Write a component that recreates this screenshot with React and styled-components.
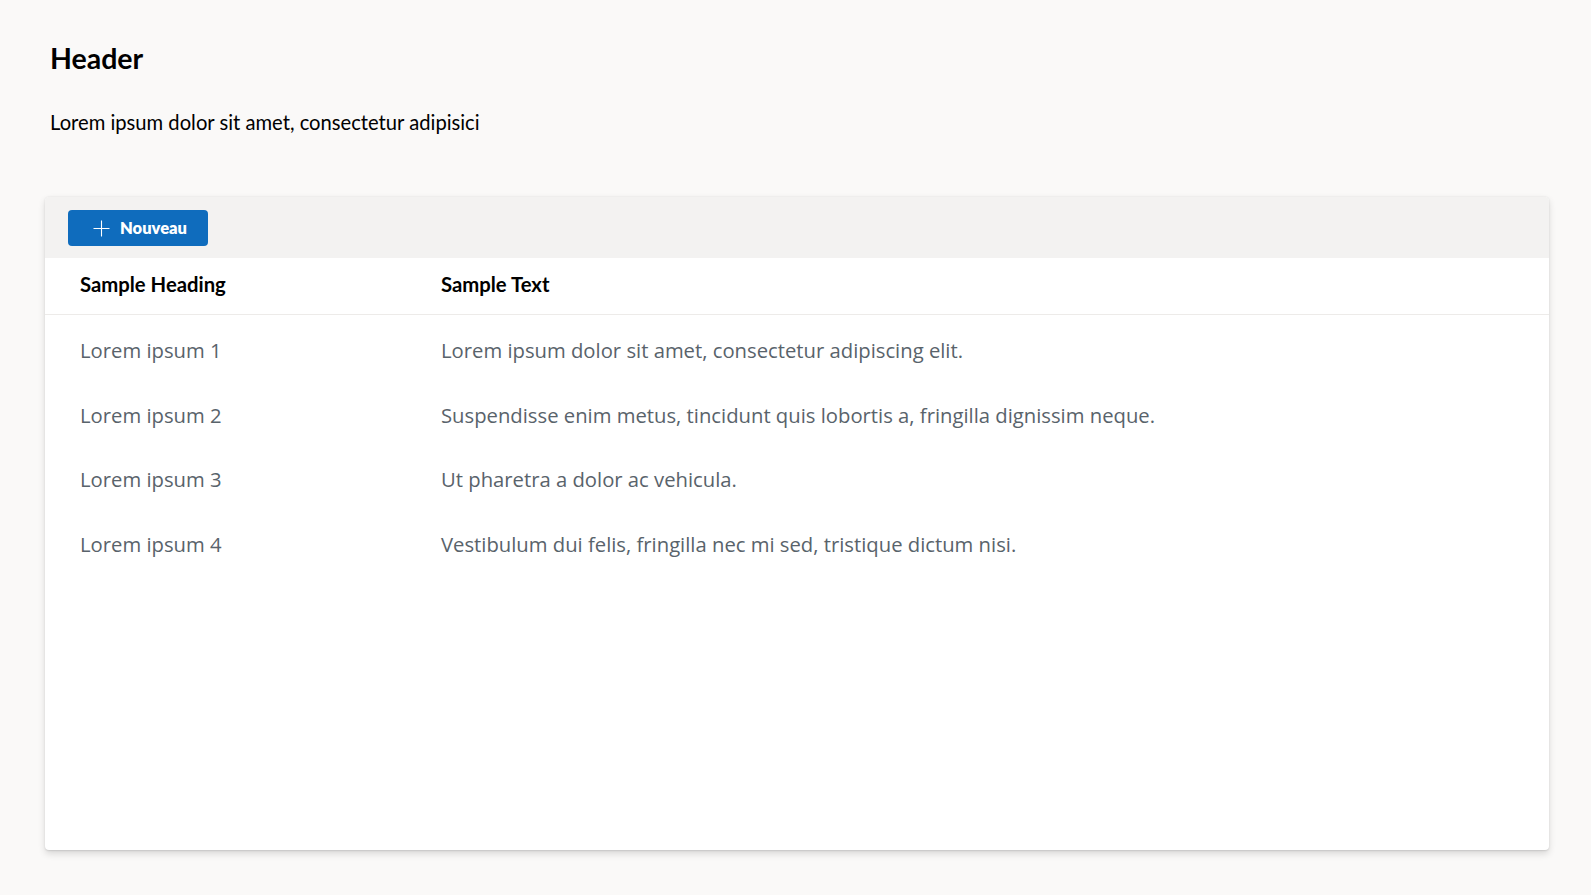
import React from "react";
import styled, { createGlobalStyle } from "styled-components";

const GlobalStyle = createGlobalStyle`
  html, body {
    margin: 0;
    padding: 0;
    background: #faf9f8;
  }
  body {
    font-family: Lato, "Open Sans", sans-serif;
    color: #000;
  }
`;

const Page = styled.div`
  min-height: 895px;
  box-sizing: border-box;
  padding: 41px 42px 45px 45px;
  display: flex;
  flex-direction: column;
`;

const Intro = styled.header`
  padding-left: 5px;
  display: flex;
  flex-direction: column;
`;

const Title = styled.h1`
  margin: 0;
  font-family: Lato, sans-serif;
  font-weight: 700;
  font-size: 28.5px;
  line-height: 34px;
  color: #000;
`;

const Subtitle = styled.p`
  margin: 35px 0 0;
  font-family: Lato, sans-serif;
  font-size: 20.2px;
  line-height: 24px;
  color: #000;
`;

const Card = styled.section`
  margin-top: 63px;
  height: 653px;
  background: #fff;
  border-radius: 4px;
  box-shadow: 0 3.2px 7.2px 0 rgba(0, 0, 0, 0.13),
    0 0.6px 1.8px 0 rgba(0, 0, 0, 0.11);
  display: flex;
  flex-direction: column;
  overflow: hidden;
`;

const Toolbar = styled.div`
  height: 61px;
  box-sizing: border-box;
  background: #f3f2f1;
  display: flex;
  align-items: center;
  padding: 1px 23px 0;
`;

const PrimaryButton = styled.button`
  height: 36px;
  width: 140px;
  display: flex;
  align-items: center;
  justify-content: flex-start;
  gap: 10px;
  padding: 0 0 0 25px;
  border: none;
  border-radius: 4px;
  background: #0f6cbd;
  color: #fff;
  font-family: Lato, sans-serif;
  font-weight: 800;
  font-size: 16.5px;
  cursor: pointer;
  box-sizing: border-box;
`;

const Row = styled.div`
  display: grid;
  grid-template-columns: 361px 1fr;
  padding-left: 35px;
  align-items: center;
`;

const HeadRow = styled(Row)`
  height: 57px;
  box-sizing: border-box;
  border-bottom: 1px solid #edebe9;
`;

const HeadCell = styled.div`
  font-family: Lato, sans-serif;
  font-weight: 700;
  font-size: 20.3px;
  line-height: 24px;
  color: #000;
  padding-bottom: 4px;
`;

const Body = styled.div`
  padding-top: 3px;
  display: flex;
  flex-direction: column;
`;

const DataRow = styled(Row)`
  height: 64.5px;
`;

const Cell = styled.div`
  font-family: "Open Sans", sans-serif;
  font-size: 20.25px;
  line-height: 28px;
  color: #59636b;
`;

const PlusIcon = () => (
  <svg width="17" height="17" viewBox="0 0 17 17" aria-hidden="true">
    <path d="M8.5 0.5v16M0.5 8.5h16" stroke="#fff" strokeWidth="1.1" fill="none" />
  </svg>
);

const rows = [
  ["Lorem ipsum 1", "Lorem ipsum dolor sit amet, consectetur adipiscing elit."],
  ["Lorem ipsum 2", "Suspendisse enim metus, tincidunt quis lobortis a, fringilla dignissim neque."],
  ["Lorem ipsum 3", "Ut pharetra a dolor ac vehicula."],
  ["Lorem ipsum 4", "Vestibulum dui felis, fringilla nec mi sed, tristique dictum nisi."],
];

export default function App() {
  return (
    <>
      <GlobalStyle />
      <Page>
        <Intro>
          <Title>Header</Title>
          <Subtitle>Lorem ipsum dolor sit amet, consectetur adipisici</Subtitle>
        </Intro>
        <Card>
          <Toolbar>
            <PrimaryButton>
              <PlusIcon />
              Nouveau
            </PrimaryButton>
          </Toolbar>
          <HeadRow>
            <HeadCell>Sample Heading</HeadCell>
            <HeadCell>Sample Text</HeadCell>
          </HeadRow>
          <Body>
            {rows.map(([a, b]) => (
              <DataRow key={a}>
                <Cell>{a}</Cell>
                <Cell>{b}</Cell>
              </DataRow>
            ))}
          </Body>
        </Card>
      </Page>
    </>
  );
}
